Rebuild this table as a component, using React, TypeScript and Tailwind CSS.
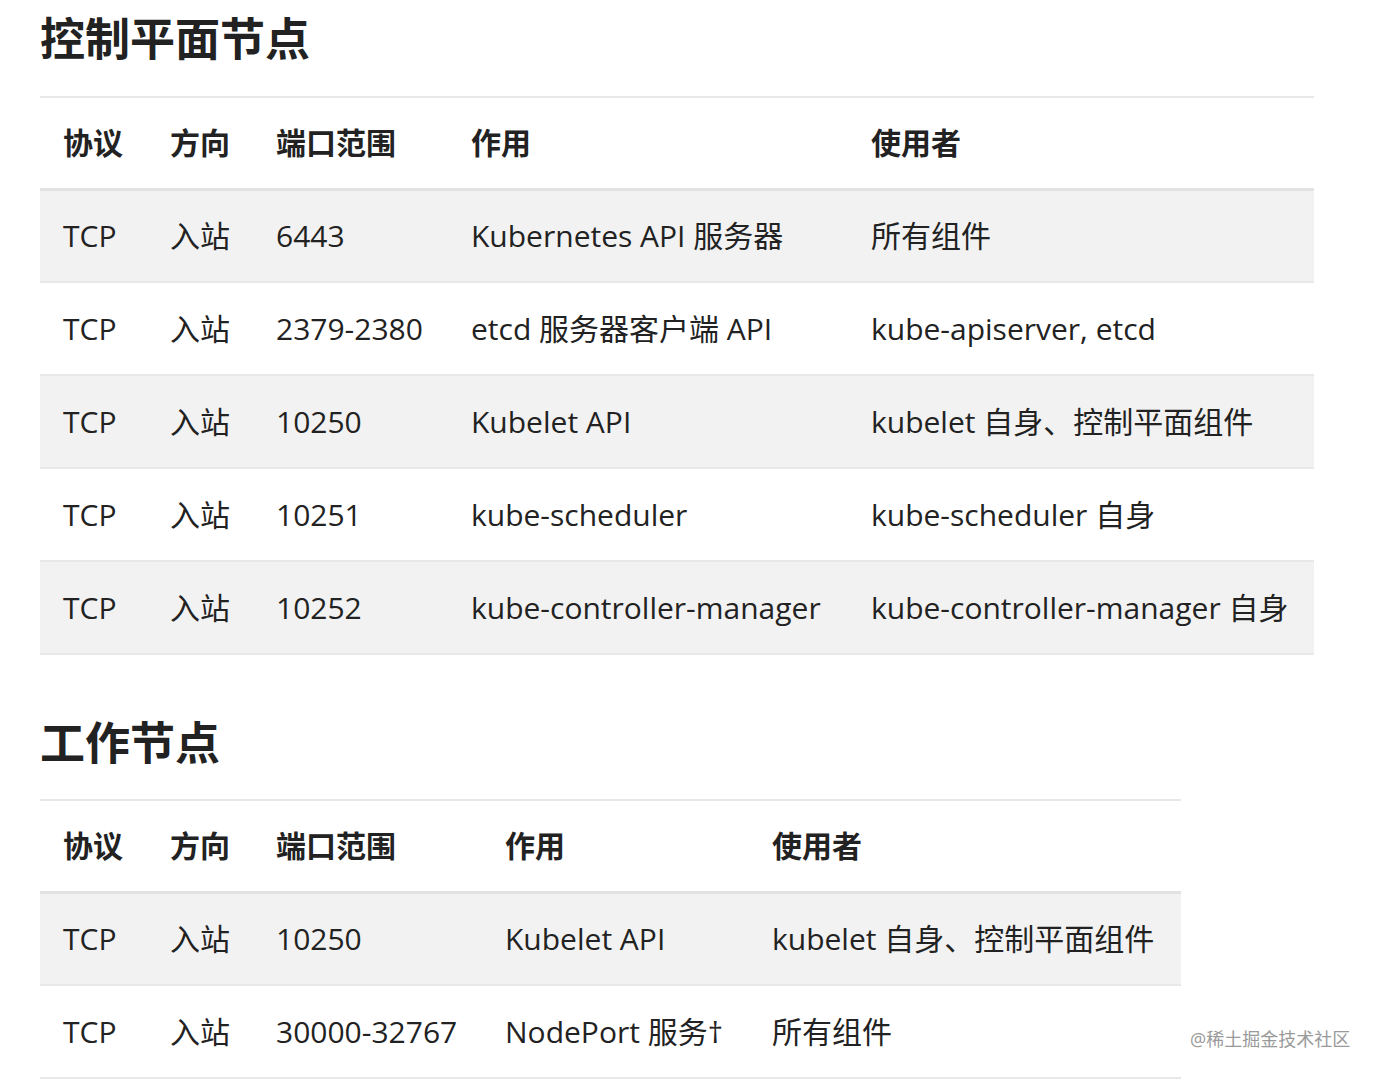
import React from 'react';

type Row = string[];

const headers = ['协议', '方向', '端口范围', '作用', '使用者'];

const controlRows: Row[] = [
  ['TCP', '入站', '6443', 'Kubernetes API 服务器', '所有组件'],
  ['TCP', '入站', '2379-2380', 'etcd 服务器客户端 API', 'kube-apiserver, etcd'],
  ['TCP', '入站', '10250', 'Kubelet API', 'kubelet 自身、控制平面组件'],
  ['TCP', '入站', '10251', 'kube-scheduler', 'kube-scheduler 自身'],
  ['TCP', '入站', '10252', 'kube-controller-manager', 'kube-controller-manager 自身'],
];

const workerRows: Row[] = [
  ['TCP', '入站', '10250', 'Kubelet API', 'kubelet 自身、控制平面组件'],
  ['TCP', '入站', '30000-32767', 'NodePort 服务†', '所有组件'],
];

function PortTable({ rows, widths }: { rows: Row[]; widths: string[] }) {
  return (
    <table className="table-fixed border-collapse border-t-2 border-[#e8e8e8]">
      <colgroup>
        {widths.map((w, i) => (
          <col key={i} className={w} />
        ))}
      </colgroup>
      <thead>
        <tr className="h-[92px] border-b-[3px] border-[#e2e2e2]">
          {headers.map(h => (
            <th key={h} className="pl-[23px] text-left font-bold">
              {h}
            </th>
          ))}
        </tr>
      </thead>
      <tbody>
        {rows.map((r, i) => (
          <tr
            key={i}
            className={`h-[93px] border-b-2 border-[#e8e8e8] ${i % 2 === 0 ? 'bg-[#f2f2f2]' : 'bg-white'}`}
          >
            {r.map((c, j) => (
              <td key={j} className="pl-[23px] whitespace-nowrap">
                {c}
              </td>
            ))}
          </tr>
        ))}
      </tbody>
    </table>
  );
}

export default function App() {
  return (
    <div
      className="relative min-h-[1080px] bg-white text-[#222] text-[30px] leading-none px-[40px]"
      style={{ fontFamily: '"Open Sans", "Noto Sans CJK SC", sans-serif' }}
    >
      <h2 className="pt-[13px] pb-[31px] text-[45px] font-bold leading-[52px]">控制平面节点</h2>
      <PortTable
        rows={controlRows}
        widths={['w-[107px]', 'w-[106px]', 'w-[195px]', 'w-[400px]', 'w-[466px]']}
      />
      <h2 className="pt-[62px] pb-[30px] text-[45px] font-bold leading-[52px]">工作节点</h2>
      <PortTable
        rows={workerRows}
        widths={['w-[107px]', 'w-[106px]', 'w-[229px]', 'w-[267px]', 'w-[432px]']}
      />
      <div className="absolute left-[1190px] top-[1030px] text-[18px] text-[#9a9a9a]">
        @稀土掘金技术社区
      </div>
    </div>
  );
}
